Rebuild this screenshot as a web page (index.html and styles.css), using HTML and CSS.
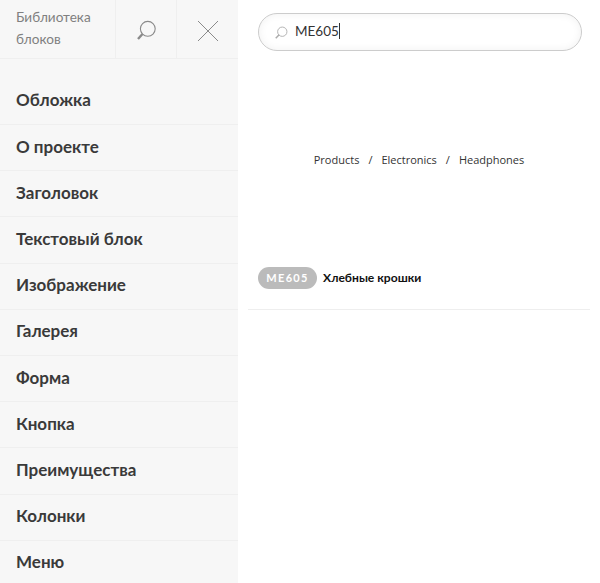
FILE: index.html
```html
<!DOCTYPE html>
<html lang="ru">
<head>
<meta charset="utf-8">
<title>Библиотека блоков</title>
<link rel="stylesheet" href="styles.css">
</head>
<body>
<aside class="sidebar">
  <header class="side-head">
    <div class="side-title">Библиотека блоков</div>
    <div class="side-btn">
      <svg width="24" height="24" viewBox="0 0 24 24" fill="none"><circle cx="13.800" cy="9.800" r="7.400" stroke="#8a8a8a" stroke-width="1.100"/><path d="M8.500 15 4 20" stroke="#8a8a8a" stroke-width="2.400"/></svg>
    </div>
    <div class="side-btn">
      <svg width="24" height="24" viewBox="0 0 24 24" fill="none"><path d="M2 2 22 22M22 2 2 22" stroke="#8a8a8a" stroke-width="1"/></svg>
    </div>
  </header>
  <nav class="menu">
    <div class="menu-item first">Обложка</div>
    <div class="menu-item">О проекте</div>
    <div class="menu-item">Заголовок</div>
    <div class="menu-item">Текстовый блок</div>
    <div class="menu-item">Изображение</div>
    <div class="menu-item">Галерея</div>
    <div class="menu-item">Форма</div>
    <div class="menu-item">Кнопка</div>
    <div class="menu-item">Преимущества</div>
    <div class="menu-item">Колонки</div>
    <div class="menu-item">Меню</div>
  </nav>
</aside>
<main class="content">
  <div class="search">
    <svg class="search-icon" width="14" height="14" viewBox="0 0 24 24" fill="none"><circle cx="14.200" cy="9.800" r="8" stroke="#aaa" stroke-width="1.500"/><path d="M8.800 15 3 21" stroke="#aaa" stroke-width="2.500"/></svg>
    <span class="search-text">ME605</span><span class="caret"></span>
  </div>
  <div class="crumbs">
    <span>Products</span><span class="sep">/</span><span>Electronics</span><span class="sep">/</span><span>Headphones</span>
  </div>
  <div class="result">
    <span class="badge">ME605</span>
    <span class="result-name">Хлебные крошки</span>
  </div>
</main>
</body>
</html>
```
FILE: styles.css
```css
* { box-sizing: border-box; }
html, body { margin: 0; height: 100%; }
body {
  display: flex;
  height: 583px;
  overflow: hidden;
  background: #fff;
  font-family: "Lato", "Noto Sans", sans-serif;
}
.sidebar {
  width: 238px;
  flex: none;
  height: 583px;
  overflow: hidden;
  background: #f7f7f7;
}
.side-head {
  display: flex;
  height: 59px;
  border-bottom: 1px solid #efefef;
}
.side-title {
  width: 116px;
  padding: 6px 10px 0 16px;
  font-size: 13.600px;
  line-height: 22px;
  color: #808080;
  border-right: 1px solid #efefef;
}
.side-btn {
  width: 61px;
  padding-top: 3px;
  display: flex;
  align-items: center;
  justify-content: center;
  border-right: 1px solid #efefef;
}
.side-btn:last-child { border-right: 0; }
.menu-item {
  height: 46.200px;
  padding: 0 0 3px 16px;
  display: flex;
  align-items: center;
  font-size: 17px;
  font-weight: 700;
  color: #3a3a3a;
  border-bottom: 1px solid #efefef;
}
.menu-item.first { height: 66px; padding: 16px 0 0 16px; }
.content {
  flex: 1;
  padding: 13px 10px 0;
}
.search {
  margin: 0 8px 0 10px;
  height: 38px;
  border: 1px solid #ccc;
  border-radius: 19px;
  display: flex;
  align-items: center;
  padding: 0 0 2px 15px;
  box-shadow: inset 0 0 8px rgba(0,0,0,.06);
}
.search-icon { margin-top: 4px; }
.search-text {
  margin-left: 7px;
  font-size: 13.500px;
  color: #333;
}
.caret {
  width: 1px;
  height: 16px;
  background: #333;
}
.crumbs {
  margin-top: 101px;
  display: flex;
  justify-content: center;
  font-family: "Open Sans", sans-serif;
  font-size: 11px;
  line-height: 16px;
  color: #333;
}
.sep { margin: 0 9px; }
.result {
  margin-top: 93px;
  height: 49px;
  padding: 0 0 15px 10px;
  display: flex;
  align-items: center;
  gap: 6px;
  border-bottom: 1px solid #eee;
}
.badge {
  width: 59px;
  height: 22px;
  border-radius: 11px;
  background: #bbb;
  color: #fff;
  font-size: 11px;
  font-weight: 700;
  letter-spacing: 1.300px;
  display: flex;
  align-items: center;
  justify-content: center;
}
.result-name {
  font-size: 12.100px;
  font-weight: 700;
  color: #111;
}
```
